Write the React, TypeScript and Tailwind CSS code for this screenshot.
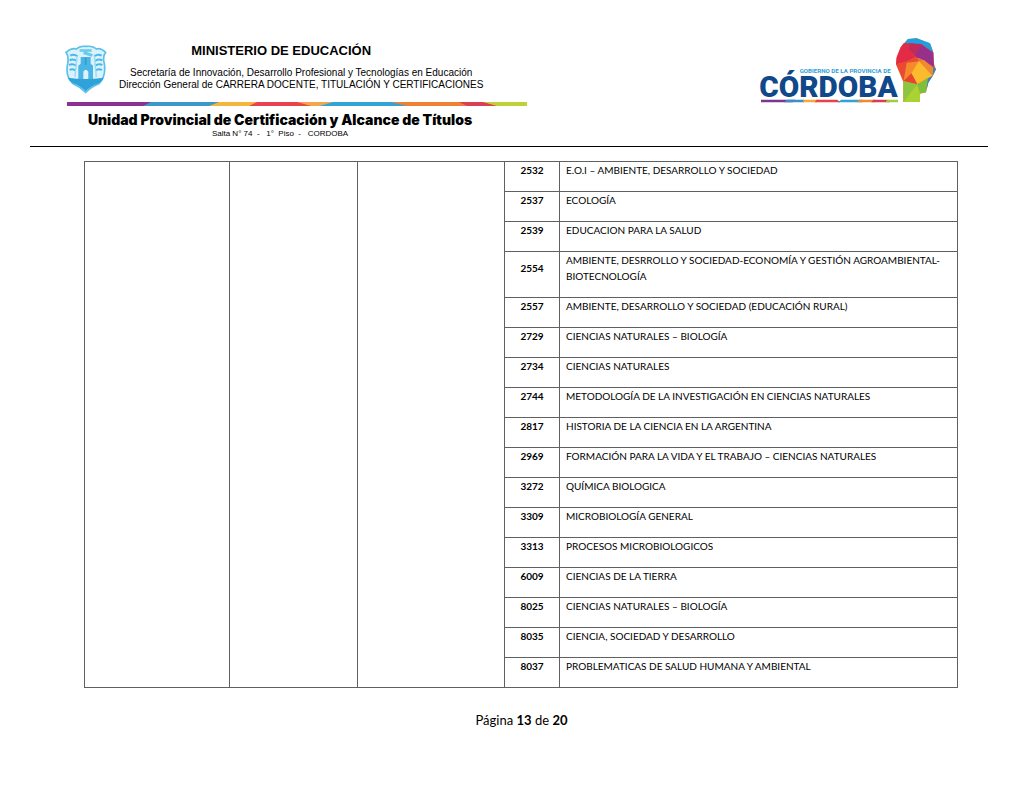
const rows: [string, string][] = [
  ["2532", "E.O.I – AMBIENTE, DESARROLLO Y SOCIEDAD"],
  ["2537", "ECOLOGÍA"],
  ["2539", "EDUCACION PARA LA SALUD"],
  ["2554", "AMBIENTE, DESRROLLO Y SOCIEDAD-ECONOMÍA Y GESTIÓN AGROAMBIENTAL-BIOTECNOLOGÍA"],
  ["2557", "AMBIENTE, DESARROLLO Y SOCIEDAD (EDUCACIÓN RURAL)"],
  ["2729", "CIENCIAS NATURALES – BIOLOGÍA"],
  ["2734", "CIENCIAS NATURALES"],
  ["2744", "METODOLOGÍA DE LA INVESTIGACIÓN EN CIENCIAS NATURALES"],
  ["2817", "HISTORIA DE LA CIENCIA EN LA ARGENTINA"],
  ["2969", "FORMACIÓN PARA LA VIDA Y EL TRABAJO – CIENCIAS NATURALES"],
  ["3272", "QUÍMICA BIOLOGICA"],
  ["3309", "MICROBIOLOGÍA GENERAL"],
  ["3313", "PROCESOS MICROBIOLOGICOS"],
  ["6009", "CIENCIAS DE LA TIERRA"],
  ["8025", "CIENCIAS NATURALES – BIOLOGÍA"],
  ["8035", "CIENCIA, SOCIEDAD Y DESARROLLO"],
  ["8037", "PROBLEMATICAS DE SALUD HUMANA Y AMBIENTAL"],
];

function Crest() {
  return (
    <svg className="h-[49px] w-[42px] shrink-0" viewBox="0 0 126 147" fill="none" aria-hidden="true">
      <path d="M34 12 Q44 2 63 4 Q84 2 94 12 Q106 8 122 22 Q112 34 118 56 Q124 94 102 116 Q80 124 62 142 Q44 124 24 116 Q0 94 8 56 Q12 34 3 22 Q20 8 34 12Z" fill="#d9f2fc" stroke="#5cc0e8" strokeWidth="5" />
      <path d="M9 98 Q60 106 116 98 Q110 112 98 116 Q78 122 62 139 Q46 122 28 116 Q14 110 9 98Z" fill="#2fa3d9" />
      <path d="M40 102 V62 L47 56 V36 H77 V56 L84 62 V102H70 V80 Q62 68 55 80 V102Z" fill="#4ab4e2" />
      <path d="M62 38 V60" stroke="#2f9fd6" strokeWidth="5" />
      <path d="M44 13 H80 V20 H44Z M58 18 L84 28 L80 35 L54 27Z" fill="#6cc8ec" />
      <path d="M16 32 Q26 26 38 34 M14 46 Q24 40 36 48 M12 60 Q22 54 34 62 M14 75 Q22 70 30 76 M88 34 Q98 26 110 32 M90 48 Q100 40 112 46 M90 62 Q102 54 112 60 M92 76 Q102 70 111 75" stroke="#4ab8e6" strokeWidth="6" />
      <path d="M36 32 L30 96 M88 32 L94 96" stroke="#9bdaf3" strokeWidth="4" />
    </svg>
  );
}

function Stripe() {
  return (
    <svg className="h-1 w-full" viewBox="0 0 460 5" preserveAspectRatio="none" aria-hidden="true">
      <rect width="88" height="5" fill="#8a3290" />
      <path d="M76 5 L84 0 H156 L144 5Z" fill="#3c97cc" />
      <path d="M142 5 L152 0 H192 L184 5Z" fill="#f4b63c" />
      <path d="M182 5 L190 0 H236 L248 5Z" fill="#e9434f" />
      <path d="M230 0 H268 L252 5 H244Z" fill="#f3a64a" />
      <path d="M252 5 L266 0 H330 L342 5Z" fill="#31a4d6" />
      <path d="M324 0 H396 L402 5 H340Z" fill="#ee8134" />
      <path d="M392 0 H418 L432 5 H400Z" fill="#dc3f52" />
      <path d="M416 0 H460 V5 H430Z" fill="#bfd138" />
    </svg>
  );
}

function CordobaLogo() {
  return (
    <svg className="h-[68px] w-[180px] shrink-0" viewBox="24 21 540 204" role="img" aria-label="Gobierno de la Provincia de Córdoba">
      <text x="149" y="129" fontFamily="Roboto, sans-serif" fontWeight="700" fontSize="18.5" fill="#2f9fd6">GOBIERNO DE LA PROVINCIA DE</text>
      <text x="28" y="200" fontFamily="Roboto, sans-serif" fontWeight="900" fontSize="89" fill="#10488a">CÓRDOBA</text>
      <path d="M33 209 H136 L128 217 H33Z" fill="#7b3791" />
      <path d="M102 217 L112 209 H162 V217Z" fill="#3c8fc8" />
      <path d="M160 209 H208 L200 217 H160Z" fill="#f6a83a" />
      <path d="M200 209 H262 L270 217 H194Z" fill="#e8434b" />
      <path d="M262 217 L274 209 H338 V217Z" fill="#2ba5d8" />
      <path d="M328 209 H376 V217 H320Z" fill="#f08a32" />
      <path d="M370 209 H412 L420 217 H364Z" fill="#d93c57" />
      <path d="M412 209 H444 V217 H406Z" fill="#a5cc3a" />
      <path d="M440 82 L452 52 L474 27 L500 25 L540 40 L550 66 L552 102 L558 118 L548 137 L535 158 L528 187 L508 191 V216 H460 V157 L438 103Z" fill="#ec6a35" />
      <path d="M455 48 L474 27 L500 25 L540 40 L550 68 L514 42 L486 46Z" fill="#1aa3e0" />
      <path d="M440 82 L452 52 L461 40 L492 40 L478 58 L496 82 L466 96 L438 103Z" fill="#e32b45" />
      <path d="M480 40 L514 42 L550 68 L530 84 L500 84 L476 58Z" fill="#c32a5c" />
      <path d="M514 46 L550 68 L552 112 L516 88 L494 78Z" fill="#97308a" />
      <path d="M438 103 L466 96 L496 82 L508 94 L476 104 L461 152Z" fill="#ea4a34" />
      <path d="M470 98 L508 94 L484 132 L461 152Z" fill="#f58a2c" />
      <path d="M507 92 L548 137 L502 163 L484 130Z" fill="#fbbb2c" />
      <path d="M507 92 L522 90 L552 116 L548 138Z" fill="#ef8a34" />
      <path d="M461 153 L484 130 L502 163Z" fill="#e7442f" />
      <path d="M550 108 L558 118 L548 139 L535 158 L530 178 L524 150 L548 137Z" fill="#3c83bf" />
      <path d="M502 163 L534 144 L528 187 L508 191Z" fill="#7fbf3c" />
      <path d="M460 153 L502 163 L482 188 L460 216Z" fill="#8cc63e" />
      <path d="M502 163 L510 191 V216 H460 L482 187Z" fill="#a9d232" />
    </svg>
  );
}

export default function App() {
  return (
    <div className="bg-white font-['Liberation_Sans',Arial,sans-serif] text-black">
      <header className="ml-[30px] mr-9 flex items-start justify-between border-b border-black pt-[37px] pb-2">
        <div className="ml-[35px] mt-2">
          <div className="flex items-start">
            <Crest />
            <div className="ml-3 -mt-1 text-center">
              <h1 className="mr-10 text-[13px] leading-5 font-bold">MINISTERIO DE EDUCACIÓN</h1>
              <p className="mt-1.5 text-[10px] leading-3">
                Secretaría de Innovación, Desarrollo Profesional y Tecnologías en Educación
                <br />
                Dirección General de CARRERA DOCENTE, TITULACIÓN Y CERTIFICACIONES
              </p>
            </div>
          </div>
          <div className="ml-0.5 mt-2 w-[460px]">
            <Stripe />
          </div>
          <div className="mr-8 mt-1 text-center">
            <h2 className="font-['Inter',sans-serif] text-sm leading-5 font-black">
              Unidad Provincial de Certificación y Alcance de Títulos
            </h2>
            <p className="text-[8px] leading-2">Salta N° 74 &nbsp;- &nbsp; 1° &nbsp;Piso &nbsp;- &nbsp; CORDOBA</p>
          </div>
        </div>
        <div className="mr-[50px]">
          <CordobaLogo />
        </div>
      </header>

      <main className="ml-[84px] mr-[66px] mt-3.5 font-['Lato',sans-serif]">
        <table className="w-full table-fixed border-collapse text-[10px] leading-4">
          <colgroup>
            <col className="w-[145px]" />
            <col className="w-32" />
            <col className="w-[147px]" />
            <col className="w-[55px]" />
            <col />
          </colgroup>
          <tbody>
            {rows.map(([code, name], i) => (
              <tr key={code}>
                {i === 0 &&
                  [0, 1, 2].map((c) => (
                    <td key={c} rowSpan={rows.length} className="border border-[#606060]" />
                  ))}
                <th scope="row" className="border border-[#606060] p-0 pb-[13px] text-center font-bold">
                  {code}
                </th>
                <td className="border border-[#606060] px-1.5 pt-0 pb-[13px]">{name}</td>
              </tr>
            ))}
          </tbody>
        </table>
      </main>

      <footer className="mt-6 pl-[19px] text-center font-['Lato',sans-serif] text-[13px] leading-4">
        Página <strong>13</strong> de <strong>20</strong>
      </footer>
    </div>
  );
}
